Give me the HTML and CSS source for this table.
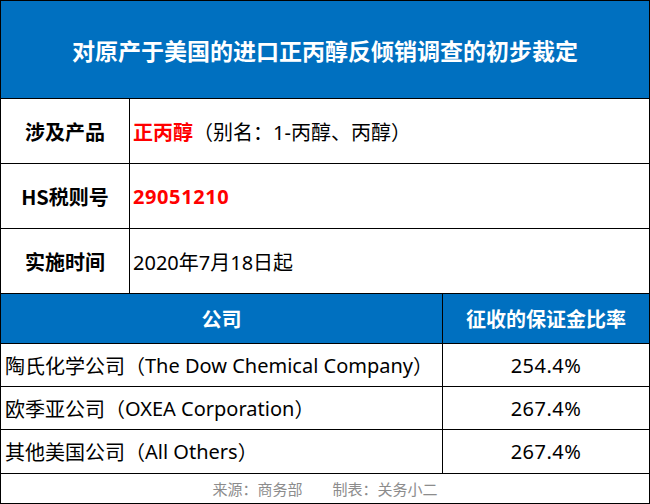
FILE: index.html
```html
<!DOCTYPE html>
<html lang="zh-CN">
<head>
<meta charset="utf-8">
<title>对原产于美国的进口正丙醇反倾销调查的初步裁定</title>
<link rel="stylesheet" href="styles.css">
</head>
<body>
<div class="sheet">
  <div class="title">对原产于美国的进口正丙醇反倾销调查的初步裁定</div>
  <div class="row info">
    <div class="label">涉及产品</div>
    <div class="value"><span class="red">正丙醇</span>（别名：1-丙醇、丙醇）</div>
  </div>
  <div class="row info">
    <div class="label">HS税则号</div>
    <div class="value"><span class="red num">29051210</span></div>
  </div>
  <div class="row info">
    <div class="label">实施时间</div>
    <div class="value">2020年7月18日起</div>
  </div>
  <div class="row head">
    <div class="company">公司</div>
    <div class="rate">征收的保证金比率</div>
  </div>
  <div class="row data r1">
    <div class="company">陶氏化学公司（<span class="latin">The Dow Chemical Company</span>）</div>
    <div class="rate">254.4%</div>
  </div>
  <div class="row data r2">
    <div class="company">欧季亚公司（<span class="latin">OXEA Corporation</span>）</div>
    <div class="rate">267.4%</div>
  </div>
  <div class="row data r3">
    <div class="company">其他美国公司（<span class="latin">All Others</span>）</div>
    <div class="rate">267.4%</div>
  </div>
  <div class="footer"><span>来源：商务部</span><span>制表：关务小二</span></div>
</div>
</body>
</html>
```

FILE: styles.css
```css
* { box-sizing: border-box; }
html, body { margin: 0; padding: 0; background: #fff; }
body {
  font-family: "Noto Sans", "Noto Sans CJK SC", sans-serif;
  color: #000;
}
.sheet {
  width: 650px;
  height: 504px;
  border: 1px solid #000;
  display: flex;
  flex-direction: column;
}
.title {
  height: 98px;
  border-bottom: 1px solid #000;
  background: #0070c0;
  color: #fff;
  font-family: "Noto Sans CJK SC", sans-serif;
  font-weight: 700;
  font-size: 23px;
  display: flex;
  align-items: center;
  justify-content: center;
}
.row {
  display: flex;
  border-bottom: 1px solid #000;
  font-size: 20px;
}
.info { height: 65px; }
.label {
  width: 129px;
  border-right: 1px solid #000;
  display: flex;
  align-items: center;
  justify-content: center;
  font-weight: 700;
  font-family: "Noto Sans CJK SC", sans-serif;
}
.value {
  flex: 1;
  display: flex;
  align-items: center;
  padding-left: 3px;
}
.red { color: #ff0000; font-weight: 700; }
.num { letter-spacing: 0.6px; }
.latin { letter-spacing: 0; }
.head {
  height: 50px;
  background: #0070c0;
  color: #fff;
  font-weight: 700;
  font-family: "Noto Sans CJK SC", sans-serif;
}
.company {
  width: 442px;
  border-right: 1px solid #000;
  display: flex;
  align-items: center;
  padding-left: 4px;
  white-space: pre;
}
.head .company { justify-content: center; padding-left: 0; }
.rate {
  flex: 1;
  display: flex;
  align-items: center;
  justify-content: center;
  letter-spacing: 0.5px;
}
.head .rate { letter-spacing: 0; }
.r1, .r2 { height: 43px; }
.r3 { height: 44px; }
.footer {
  flex: 1;
  display: flex;
  align-items: center;
  justify-content: center;
  gap: 30px;
  font-size: 15px;
  color: #8c8c8c;
  font-family: "Noto Sans CJK SC", sans-serif;
}
```
